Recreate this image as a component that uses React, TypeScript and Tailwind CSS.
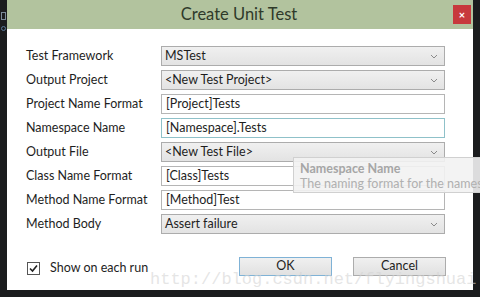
import React from "react";

const font = { fontFamily: 'Lato, "Noto Sans", sans-serif' };

function Chevron() {
  return (
    <svg width="8" height="5" viewBox="0 0 8 5" className="shrink-0">
      <path d="M1 1 L4 4 L7 1" fill="none" stroke="#8a8a8a" strokeWidth="1" />
    </svg>
  );
}

function Select({ value }: { value: string }) {
  return (
    <div className="flex h-[20px] w-[284px] items-center justify-between border border-[#acacac] bg-gradient-to-b from-[#f0f0f0] to-[#e3e3e3] pl-[3px] pr-[6px] text-[12.5px] text-[#1e1e1e]">
      <span className="whitespace-nowrap leading-none">{value}</span>
      <Chevron />
    </div>
  );
}

function TextBox({ value, focused }: { value: string; focused?: boolean }) {
  return (
    <div
      className={
        focused
          ? "flex h-[20px] w-[284px] items-center border border-[#8fc1c9] bg-white pl-[4px] text-[12.5px] text-[#1e1e1e]"
          : "flex h-[20px] w-[284px] items-center border border-[#b5b5b5] bg-white pl-[4px] text-[12.5px] text-[#1e1e1e]"
      }
    >
      <span className="whitespace-nowrap leading-none">{value}</span>
    </div>
  );
}

const rows: { label: string; value: string; kind: "select" | "text" | "focus" }[] = [
  { label: "Test Framework", value: "MSTest", kind: "select" },
  { label: "Output Project", value: "<New Test Project>", kind: "select" },
  { label: "Project Name Format", value: "[Project]Tests", kind: "text" },
  { label: "Namespace Name", value: "[Namespace].Tests", kind: "focus" },
  { label: "Output File", value: "<New Test File>", kind: "select" },
  { label: "Class Name Format", value: "[Class]Tests", kind: "text" },
  { label: "Method Name Format", value: "[Method]Test", kind: "text" },
  { label: "Method Body", value: "Assert failure", kind: "select" },
];

export default function App() {
  return (
    <div className="relative h-[297px] w-[480px] overflow-hidden bg-[#1b1c1e]" style={font}>
      <div className="flex h-full">
        <div className="flex w-[7px] flex-col items-center gap-[6px] pt-[12px]">
          <div className="h-[8px] w-[5px] border border-[#7b8a99]" />
          <div className="h-[5px] w-[5px] rounded-full border border-[#5a7a9a]" />
        </div>
        <div className="flex h-[290px] w-[466px] flex-col bg-white">
          <div className="flex h-[29px] items-center justify-between bg-[#b2c39e] pr-[2px]">
            <div className="w-[18px]" />
            <div className="pb-[1px] text-[16.5px] leading-none text-[#2f3a2a]">Create Unit Test</div>
            <div className="flex h-[19px] w-[18px] items-center justify-center bg-[#c7393c] text-[11px] font-bold leading-none text-white">
              ×
            </div>
          </div>
          <div className="flex flex-col gap-[4px] pl-[19px] pt-[17px]">
            {rows.map((r) => (
              <div key={r.label} className="flex h-[20px] items-center">
                <div className="w-[135px] whitespace-nowrap text-[12.5px] leading-none text-[#1e1e1e]">{r.label}</div>
                {r.kind === "select" ? (
                  <Select value={r.value} />
                ) : (
                  <TextBox value={r.value} focused={r.kind === "focus"} />
                )}
              </div>
            ))}
          </div>
          <div className="flex items-center pl-[20px] pt-[23px]">
            <div className="flex w-[212px] items-center gap-[10px] pt-[3px]">
              <div className="flex h-[13px] w-[13px] items-center justify-center border border-[#555] bg-white">
                <svg width="11" height="11" viewBox="0 0 11 11">
                  <path d="M2 5.5 L4.5 8 L9 2.5" fill="none" stroke="#222" strokeWidth="1.6" />
                </svg>
              </div>
              <span className="whitespace-nowrap text-[12.5px] leading-none text-[#1e1e1e]">Show on each run</span>
            </div>
            <div className="flex h-[19px] w-[93px] items-center justify-center border border-[#7fb2d6] bg-gradient-to-b from-[#f0f0f0] to-[#e1e1e1] text-[12.5px] leading-none text-[#1e1e1e]">
              OK
            </div>
            <div className="ml-[21px] flex h-[19px] w-[93px] items-center justify-center border border-[#acacac] bg-gradient-to-b from-[#f0f0f0] to-[#e1e1e1] text-[12.5px] leading-none text-[#1e1e1e]">
              Cancel
            </div>
          </div>
        </div>
      </div>
      {/* tooltip */}
      <div className="absolute left-[293px] top-[157px] h-[36px] w-[200px] border border-[#d0d0d0] bg-[#f2f2f2]/90 pl-[6px] pt-[3px]">
        <div className="whitespace-nowrap text-[12.5px] font-bold leading-[15px] text-[#a6a6a6]">Namespace Name</div>
        <div className="whitespace-nowrap text-[12.5px] leading-[15px] text-[#b0b0b0]">The naming format for the names</div>
      </div>
      {/* watermark */}
      <div
        className="pointer-events-none absolute left-[150px] top-[271px] whitespace-nowrap text-[17px] leading-none text-[#d4d4d4]/60"
        style={{ fontFamily: '"Liberation Mono", monospace' }}
      >
        http://blog.csdn.net/flyingshuai
      </div>
    </div>
  );
}
